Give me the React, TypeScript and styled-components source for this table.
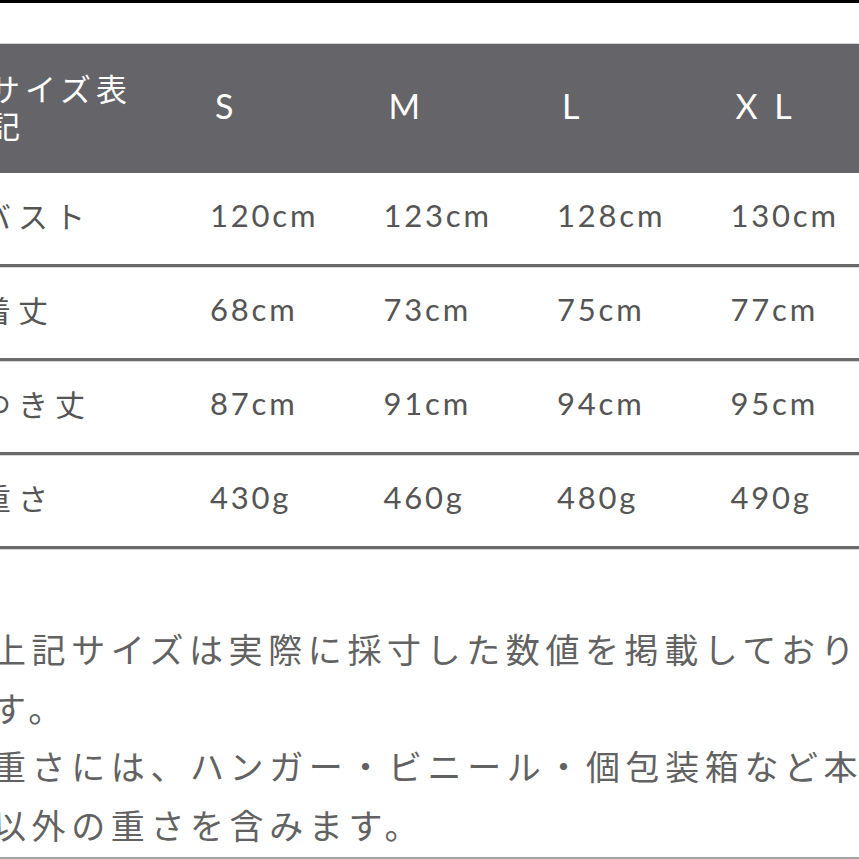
import React, { FC } from "react";
import styled, { createGlobalStyle } from "styled-components";

const sizes = ["S", "M", "L", "X L"];

const rows = [
  { label: "バスト", values: ["120cm", "123cm", "128cm", "130cm"] },
  { label: "着丈", values: ["68cm", "73cm", "75cm", "77cm"] },
  { label: "ゆき丈", values: ["87cm", "91cm", "94cm", "95cm"] },
  { label: "重さ", values: ["430g", "460g", "480g", "490g"] },
];

const notes = [
  "上記サイズは実際に採寸した数値を掲載しておりま",
  "す。",
  "重さには、ハンガー・ビニール・個包装箱など本体",
  "以外の重さを含みます。",
];

const App: FC = () => {
  return (
    <>
      <GlobalStyle />
      <Page>
        <TopBar />
        <Sheet>
          <HeaderRow>
            <HeaderLabel>
              サイズ表
              <br />記
            </HeaderLabel>
            {sizes.map((s) => (
              <HeaderSize key={s}>{s}</HeaderSize>
            ))}
          </HeaderRow>
          {rows.map((row) => (
            <BodyRow key={row.label}>
              <RowLabel>{row.label}</RowLabel>
              {row.values.map((v) => (
                <Value key={v}>{v}</Value>
              ))}
            </BodyRow>
          ))}
          <Notes>
            {notes.map((n) => (
              <NoteLine key={n}>{n}</NoteLine>
            ))}
          </Notes>
        </Sheet>
        <BottomRule />
      </Page>
    </>
  );
};

const GlobalStyle = createGlobalStyle`
  html, body {
    margin: 0;
    padding: 0;
    background: #fff;
    overflow: hidden;
  }
`;

const Page = styled.div`
  display: flex;
  flex-direction: column;
  width: 859px;
  height: 859px;
  overflow: hidden;
  background: #fff;
`;

const TopBar = styled.div`
  height: 3px;
  background: #000;
  flex-shrink: 0;
`;

const Sheet = styled.div`
  display: flex;
  flex-direction: column;
  margin-left: -19px;
  padding-top: 40px;
  width: 940px;
`;

const Grid = styled.div`
  display: grid;
  grid-template-columns: 227px repeat(4, 173.5px);
  align-items: center;
  box-sizing: border-box;
`;

const HeaderRow = styled(Grid)`
  height: 130px;
  background: #656468;
  border-top: 1px solid #d2d2d2;
  color: #fff;
  padding-bottom: 6px;
`;

const HeaderLabel = styled.div`
  padding-left: 8px;
  font-family: "Noto Sans CJK JP", "Noto Sans", sans-serif;
  font-size: 31px;
  line-height: 37px;
  letter-spacing: 5px;
`;

const HeaderSize = styled.div`
  padding-left: 7px;
  font-family: Lato, "Liberation Sans", sans-serif;
  font-size: 34px;
  letter-spacing: 4px;
  white-space: pre;
`;

const BodyRow = styled(Grid)`
  height: 94px;
  border-bottom: 3px solid #6a6a6a;
  box-shadow: 0 1px 0 #d8d8d8;
  padding-bottom: 8px;
  color: #555;
`;

const RowLabel = styled.div`
  font-family: "Noto Sans CJK JP", "Noto Sans", sans-serif;
  font-size: 30px;
  letter-spacing: 7px;
`;

const Value = styled.div`
  padding-left: 2px;
  font-family: Lato, "Liberation Sans", sans-serif;
  font-size: 31px;
  letter-spacing: 2.8px;
`;

const Notes = styled.div`
  margin-top: 71px;
  margin-left: 11px;
  color: #626262;
  font-family: "Noto Sans CJK JP", "Noto Sans", sans-serif;
  font-size: 34px;
  line-height: 58.7px;
  letter-spacing: 5.6px;
`;

const NoteLine = styled.div`
  white-space: nowrap;
`;

const BottomRule = styled.div`
  margin-top: auto;
  height: 2px;
  background: #a3a3a3;
  flex-shrink: 0;
`;

export default App;
